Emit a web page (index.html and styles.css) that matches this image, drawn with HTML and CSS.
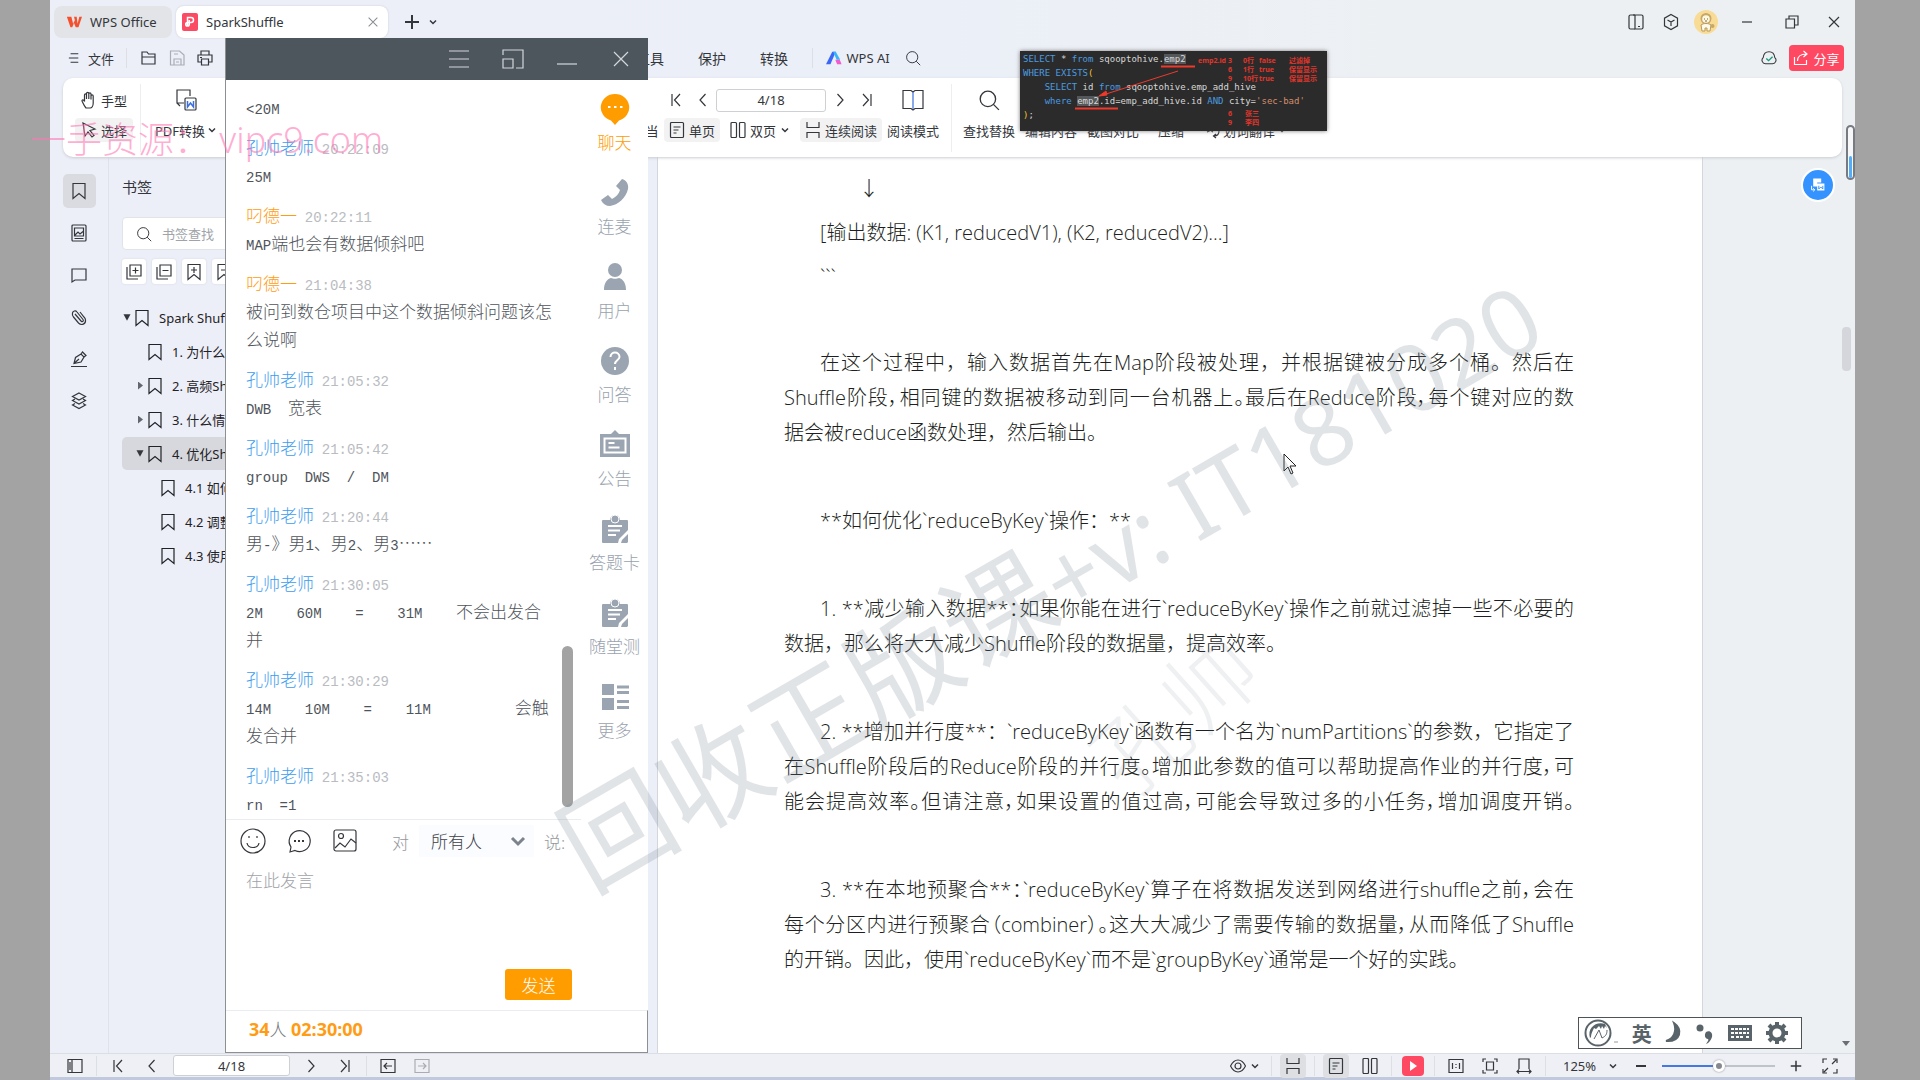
FILE: index.html
```html
<!DOCTYPE html>
<html lang="zh-CN">
<head>
    <meta charset="UTF-8">
    <meta name="viewport" content="width=device-width, initial-scale=1.0">
    <title>SparkShuffle - WPS Office</title>
    <link rel="stylesheet" href="styles.css">
</head>
<body>
    <!-- shared icons -->
    <svg class="sprite" aria-hidden="true">
        <symbol id="i-down" viewBox="0 0 10 10"><path d="M2 3.5l3 3 3-3" stroke-width="1.5"/></symbol>
        <symbol id="i-first" viewBox="0 0 16 16"><path d="M4 2v12M12 2L6.500 8l5.500 6"/></symbol>
        <symbol id="i-prev" viewBox="0 0 16 16"><path d="M10.500 2L5 8l5.500 6"/></symbol>
        <symbol id="i-next" viewBox="0 0 16 16"><path d="M5.500 2L11 8l-5.500 6"/></symbol>
        <symbol id="i-last" viewBox="0 0 16 16"><path d="M12 2v12M4 2l5.500 6L4 14"/></symbol>
        <symbol id="i-close" viewBox="0 0 16 16"><path d="M3 3l10 10M13 3L3 13"/></symbol>
        <symbol id="i-min" viewBox="0 0 16 16"><path d="M3 8h10"/></symbol>
        <symbol id="i-plus" viewBox="0 0 16 16"><path d="M8 1v14M1 8h14"/></symbol>
        <symbol id="i-search" viewBox="0 0 20 20"><circle cx="9" cy="9" r="7"/><path d="M14 14l5 5"/></symbol>
        <symbol id="i-mark" viewBox="0 0 16 18"><path d="M2 1.500h12v15l-6-5-6 5z"/></symbol>
        <symbol id="i-page" viewBox="0 0 16 16"><rect x="1.500" y=".5" width="13" height="15" rx="1"/><path d="M4.500 5h7M4.500 8h5M4.500 11h3"/></symbol>
        <symbol id="i-dual" viewBox="0 0 16 16"><rect x="1" y=".5" width="5.500" height="15" rx="1"/><rect x="9.500" y=".5" width="5.500" height="15" rx="1"/></symbol>
        <symbol id="i-cont" viewBox="0 0 16 16"><path d="M2 0v5.500h12V0M2 16v-5.500h12V16"/></symbol>
        <symbol id="i-note" viewBox="0 0 30 32"><path d="M3 7h7a5 5 0 0 1 10 0h7a1 1 0 0 1 1 1v9l-9 9-1 4H3a1 1 0 0 1-1-1V8a1 1 0 0 1 1-1z"/><path class="cut" d="M8 13h14M8 17.500h12M8 22h8"/><path d="M21 30l1-3 6-6v8l-1 1z"/><circle class="ring" cx="15" cy="6" r="4"/></symbol>
    </svg>

    <div class="app">
        <header class="tabs">
            <button class="tab tab-home">
                <svg class="icon" viewBox="0 0 18 16"><path d="M1 2h5l2 8 2-4-1-4h3l1 8 2-8h3l-4 12h-3l-2-5-2 5H5z" fill="#f4502e" stroke="none"/></svg>
                WPS Office
            </button>
            <div class="tab tab-open">
                <svg class="icon" viewBox="0 0 16 18"><rect width="16" height="18" rx="2" fill="#fb4a63" stroke="none"/><path d="M5.500 13V4.500h3.500a2.500 2.500 0 0 1 0 5H5.500a1.800 1.800 0 1 0 1.800 1.800V7" stroke="#fff" stroke-width="1.500"/></svg>
                <span>SparkShuffle</span>
                <button class="plain tab-close" aria-label="关闭标签"><svg class="icon"><use href="#i-close"/></svg></button>
            </div>
            <button class="plain" aria-label="新建"><svg class="icon bold"><use href="#i-plus"/></svg></button>
            <button class="plain" aria-label="标签列表"><svg class="icon tiny"><use href="#i-down"/></svg></button>
            <div class="window-buttons">
                <button class="plain" aria-label="分屏"><svg class="icon" viewBox="0 0 16 18"><path d="M7 16H2.500A1.500 1.500 0 0 1 1 14.500v-11A1.500 1.500 0 0 1 2.500 2H7"/><path d="M5 2h8.500A1.500 1.500 0 0 1 15 3.500v11a1.500 1.500 0 0 1-1.500 1.500H7V2M10 13.500h2"/></svg></button>
                <button class="plain" aria-label="应用"><svg class="icon" viewBox="0 0 16 18"><path d="M8 1.500l6.500 3.700v7.600L8 16.500l-6.500-3.700V5.200zM4.500 7L8 9l3.500-2M8 9v4"/></svg></button>
                <button class="plain avatar" aria-label="账号"><svg viewBox="0 0 24 24"><circle cx="12" cy="12" r="12" fill="#f8dc96"/><circle cx="12" cy="8.500" r="5.500" fill="#c8a868"/><circle cx="12" cy="9" r="3.800" fill="#fff8e0"/><path d="M7 15c2-2 8-2 10 0l-1 6h-3v-3h-2v3H8z" fill="#fffbe8" stroke="#b89860"/><path d="M10.500 8.500v1M13.500 8.500v1M11 11h2" stroke="#79633a"/><circle cx="18.500" cy="16" r="2" fill="#c8a868"/></svg></button>
                <button class="plain win-min" aria-label="最小化"><svg class="icon"><use href="#i-min"/></svg></button>
                <button class="plain" aria-label="还原"><svg class="icon" viewBox="0 0 16 16"><path d="M2 5h8.500v9H2zM5 5V2h9v9h-3.500"/></svg></button>
                <button class="plain" aria-label="关闭"><svg class="icon"><use href="#i-close"/></svg></button>
            </div>
        </header>

        <nav class="menu">
            <button class="plain menu-file"><svg class="icon small" viewBox="0 0 14 14"><path d="M3 2h9M1 7h11M3 12h9"/></svg>文件</button>
            <i class="sep"></i>
            <button class="plain" aria-label="打开"><svg class="icon" viewBox="0 0 16 16"><path d="M1 14V2h5l1.500 2H14v10zM1 7h13.500"/></svg></button>
            <button class="plain faded" aria-label="保存"><svg class="icon" viewBox="0 0 16 16"><path d="M1.500 1h9L15 5v10H1.500zM5 15V9h7v6M5 4h4M7 12h3"/></svg></button>
            <button class="plain" aria-label="打印"><svg class="icon" viewBox="0 0 16 16"><path d="M4 5V1h8v4M4 12H1V5h14v7h-3M4.500 9h7v6h-7zM3 7.500h2"/></svg></button>
            <div class="menu-words">
                <button class="plain">工具</button>
                <button class="plain">保护</button>
                <button class="plain">转换</button>
            </div>
            <i class="sep"></i>
            <button class="plain menu-ai"><svg class="icon" viewBox="0 0 18 16"><path d="M7 1h4L5 15H0z" fill="#3c66f5" stroke="none"/><path d="M8 1h3l5 9h-4z" fill="#35b6fb" stroke="none"/><path d="M10.500 10h5l2 5h-5z" fill="#f25ad0" stroke="none"/></svg>WPS AI</button>
            <button class="plain" aria-label="搜索"><svg class="icon"><use href="#i-search"/></svg></button>
            <div class="menu-right">
                <svg class="icon" viewBox="0 0 18 16"><path d="M5 14.500a4 4 0 0 1-2.500-7C3 3 6 1 9 1s6 2 6.500 6.500a4 4 0 0 1-2.500 7z"/><path d="M6 8.500l2.500 2.500L13 6.500" stroke="#159a7d" stroke-width="1.500"/></svg>
                <button class="share"><svg class="icon" viewBox="0 0 16 16"><path d="M1.500 7v7.500h12V10M4.500 11c0-5 3-7 9-7M10.500 1l3.500 3-3.500 3"/></svg>分享</button>
            </div>
        </nav>

        <section class="ribbon">
            <div class="tool-group">
                <button class="tool"><svg class="icon" viewBox="0 0 16 18"><path d="M5 17c-2-2-3-5-4-7 0-1.500 1.500-1.500 2.500.5V4c0-1.500 2-1.500 2 0v4V2.500c0-1.500 2.300-1.500 2.300 0V8 3c0-1.500 2.200-1.500 2.200 0v5.500V5c0-1.500 2.200-1.500 2.200 0v7c0 3-1.500 5-3 5z"/></svg>手型</button>
                <button class="tool active"><svg class="icon" viewBox="0 0 16 16"><path d="M2 1l12 6-5 1.500 4 5-2 1.500-4-5-3 4z"/></svg>选择</button>
            </div>
            <i class="sep tall"></i>
            <div class="tool-group center pdf">
                <svg class="icon big" viewBox="0 0 22 22"><path d="M9 14H2V1h13v6M2 14l3 3"/><rect x="10" y="9" width="11" height="12" rx="1"/><path d="M12.500 12v6l3-4 3 4v-6" stroke="#3b6fe0" stroke-width="1.500"/></svg>
                <button class="tool">PDF转换<svg class="icon tiny"><use href="#i-down"/></svg></button>
            </div>
            <div class="tool-group nav-group">
                <div class="pager">
                    <button class="plain" aria-label="首页"><svg class="icon"><use href="#i-first"/></svg></button>
                    <button class="plain" aria-label="上一页"><svg class="icon"><use href="#i-prev"/></svg></button>
                    <input class="page-input" type="text" value="4/18" aria-label="页码">
                    <button class="plain" aria-label="下一页"><svg class="icon"><use href="#i-next"/></svg></button>
                    <button class="plain" aria-label="末页"><svg class="icon"><use href="#i-last"/></svg></button>
                </div>
                <div class="views">
                    <button class="plain">当</button>
                    <button class="tool active"><svg class="icon"><use href="#i-page"/></svg>单页</button>
                    <button class="tool"><svg class="icon"><use href="#i-dual"/></svg>双页<svg class="icon tiny"><use href="#i-down"/></svg></button>
                    <button class="tool active"><svg class="icon"><use href="#i-cont"/></svg>连续阅读</button>
                </div>
            </div>
            <div class="tool-group center">
                <svg class="icon big" viewBox="0 0 22 22"><path d="M11 3L9 1.500H1v18h8l2 1.500 2-1.500h8v-18h-8z"/><path d="M11 3v17" stroke="#3b6fe0"/></svg>
                <button class="tool">阅读模式</button>
            </div>
            <i class="sep tall"></i>
            <div class="tool-group center">
                <svg class="icon big"><use href="#i-search"/></svg>
                <button class="tool">查找替换</button>
            </div>
            <div class="tool-group center"><span class="icon big"></span><button class="tool">编辑内容</button></div>
            <div class="tool-group center"><span class="icon big"></span><button class="tool">截图对比</button></div>
            <div class="tool-group center zip"><span class="icon big"></span><button class="tool">压缩</button></div>
            <div class="tool-group center"><span class="icon big"></span><button class="tool"><svg class="icon" viewBox="0 0 16 16"><path d="M1 3h7M4.500 1v2M2 10c3-1 5-4 5-7M3 5c1 3 3 4 5 5M9 14c3 0 5-1 5-5M11 12l-2.500 2 2.500 2"/></svg>划词翻译<svg class="icon tiny"><use href="#i-down"/></svg></button></div>
        </section>

        <main class="work">
            <aside class="rail">
                <button class="rail-btn active" aria-label="书签"><svg class="icon"><use href="#i-mark"/></svg></button>
                <button class="rail-btn" aria-label="缩略图"><svg class="icon" viewBox="0 0 16 18"><rect x="1" y="1" width="14" height="16" rx="1"/><path d="M3.500 4h9v8h-9zM4 11l3-3 2 2 3-2.500M3.500 14.500h9"/></svg></button>
                <button class="rail-btn" aria-label="批注"><svg class="icon" viewBox="0 0 16 16"><path d="M1 15V2h14v11H4z"/></svg></button>
                <button class="rail-btn" aria-label="附件"><svg class="icon" viewBox="0 0 16 16"><path d="M4 5l6 7c1.500 1.500 3 0 2-1.500L6 3C4.500 1 2 2 1.500 4s0 3 1 4l5 6c3 3 7.500 1 7-3 0-1-.5-2-1.500-3L9 3"/></svg></button>
                <button class="rail-btn" aria-label="签名"><svg class="icon" viewBox="0 0 16 16"><path d="M0 15.500h16M3 12.500l1.500-6L10 3l3 3-3 5zM10 3l1.500-2L15 4.500 13 6M3 12.500L8 8"/></svg></button>
                <button class="rail-btn" aria-label="图层"><svg class="icon" viewBox="0 0 16 18"><path d="M8 1l6.500 3.500L8 8 1.500 4.500zM4 7L1.500 8.500 8 12l6.500-3.500L12 7M4 11.500L1.500 13 8 16.500l6.500-3.500-2.500-1.500"/></svg></button>
            </aside>

            <aside class="marks">
                <h2>书签</h2>
                <label class="mark-search">
                    <svg class="icon"><use href="#i-search"/></svg>
                    <input type="text" placeholder="书签查找">
                </label>
                <div class="mark-tools">
                    <button aria-label="展开"><svg class="icon" viewBox="0 0 16 16"><path d="M4 1h11v11H4zM1 3v12h11M9.500 3.500v6M6.500 6.500h6"/></svg></button>
                    <button aria-label="收起"><svg class="icon" viewBox="0 0 16 16"><path d="M4 1h11v11H4zM1 3v12h11M6.500 6.500h6"/></svg></button>
                    <button aria-label="添加书签"><svg class="icon" viewBox="0 0 16 16"><path d="M2 .5h12v15l-6-5-6 5zM8 3v6M5 6h6"/></svg></button>
                    <button aria-label="删除书签"><svg class="icon" viewBox="0 0 16 16"><path d="M2 .5h12v15l-6-5-6 5zM5 6h6"/></svg></button>
                </div>
                <ul class="tree">
                    <li class="lv0"><i class="arrow open"></i><svg class="icon"><use href="#i-mark"/></svg>Spark Shuffle</li>
                    <li class="lv1"><i class="arrow none"></i><svg class="icon"><use href="#i-mark"/></svg>1. 为什么</li>
                    <li class="lv1"><i class="arrow"></i><svg class="icon"><use href="#i-mark"/></svg>2. 高频Shuffle</li>
                    <li class="lv1"><i class="arrow"></i><svg class="icon"><use href="#i-mark"/></svg>3. 什么情况</li>
                    <li class="lv1 selected"><i class="arrow open"></i><svg class="icon"><use href="#i-mark"/></svg>4. 优化Shuffle</li>
                    <li class="lv2"><i class="arrow none"></i><svg class="icon"><use href="#i-mark"/></svg>4.1 如何</li>
                    <li class="lv2"><i class="arrow none"></i><svg class="icon"><use href="#i-mark"/></svg>4.2 调整</li>
                    <li class="lv2"><i class="arrow none"></i><svg class="icon"><use href="#i-mark"/></svg>4.3 使用</li>
                </ul>
            </aside>

            <article class="doc">
                <p class="doc-arrow">↓</p>
                <p class="tight">[输出数据: (K1, reducedV1), (K2, reducedV2)...]</p>
                <p class="tight">```</p>
                <p>
                    <span class="full first">在这个过程中，输入数据首先在Map阶段被处理，并根据键被分成多个桶。然后在</span>
                    <span class="full snug">Shuffle阶段，相同键的数据被移动到同一台机器上。最后在Reduce阶段，每个键对应的数</span>
                    <span class="line">据会被reduce函数处理，然后输出。</span>
                </p>
                <p><span class="line first">**如何优化`reduceByKey`操作：**</span></p>
                <p>
                    <span class="full first snug">1. **减少输入数据**：如果你能在进行`reduceByKey`操作之前就过滤掉一些不必要的</span>
                    <span class="line">数据，那么将大大减少Shuffle阶段的数据量，提高效率。</span>
                </p>
                <p>
                    <span class="full first">2. **增加并行度**：`reduceByKey`函数有一个名为`numPartitions`的参数，它指定了</span>
                    <span class="full snug">在Shuffle阶段后的Reduce阶段的并行度。增加此参数的值可以帮助提高作业的并行度，可</span>
                    <span class="full snug">能会提高效率。但请注意，如果设置的值过高，可能会导致过多的小任务，增加调度开销。</span>
                </p>
                <p>
                    <span class="full first snug">3. **在本地预聚合**：`reduceByKey`算子在将数据发送到网络进行shuffle之前，会在</span>
                    <span class="full snug">每个分区内进行预聚合（combiner）。这大大减少了需要传输的数据量，从而降低了Shuffle</span>
                    <span class="line">的开销。因此，使用`reduceByKey`而不是`groupByKey`通常是一个好的实践。</span>
                </p>
            </article>
        </main>

        <footer class="status">
            <button class="cell" aria-label="侧栏"><svg class="icon" viewBox="0 0 16 16"><path d="M1 1.500h14v13H1zM5 1.500v13M3 4v8"/></svg></button>
            <i class="sep"></i>
            <button class="cell" aria-label="首页"><svg class="icon"><use href="#i-first"/></svg></button>
            <button class="cell" aria-label="上一页"><svg class="icon"><use href="#i-prev"/></svg></button>
            <input class="page-input" type="text" value="4/18" aria-label="当前页">
            <button class="cell" aria-label="下一页"><svg class="icon"><use href="#i-next"/></svg></button>
            <button class="cell" aria-label="末页"><svg class="icon"><use href="#i-last"/></svg></button>
            <i class="sep"></i>
            <button class="cell" aria-label="后退"><svg class="icon" viewBox="0 0 16 16"><path d="M1 1.500h14v13H1zM12 8H4M7 5L4 8l3 3"/></svg></button>
            <button class="cell faded" aria-label="前进"><svg class="icon" viewBox="0 0 16 16"><path d="M1 1.500h14v13H1zM4 8h8M9 5l3 3-3 3"/></svg></button>
            <div class="status-right">
                <button class="cell wide" aria-label="护眼"><svg class="icon" viewBox="0 0 16 16"><path d="M.5 8c2-4 5-6 7.500-6s5.500 2 7.500 6c-2 4-5 6-7.500 6S2.500 12 .5 8z"/><circle cx="8" cy="8" r="3"/></svg><svg class="icon tiny"><use href="#i-down"/></svg></button>
                <i class="sep"></i>
                <button class="cell" aria-label="连续"><span class="on"><svg class="icon"><use href="#i-cont"/></svg></span></button>
                <i class="sep"></i>
                <button class="cell" aria-label="单页"><span class="on"><svg class="icon"><use href="#i-page"/></svg></span></button>
                <button class="cell" aria-label="双页"><svg class="icon"><use href="#i-dual"/></svg></button>
                <i class="sep"></i>
                <button class="cell" aria-label="播放"><span class="play"></span></button>
                <i class="sep"></i>
                <button class="cell" aria-label="实际大小"><svg class="icon" viewBox="0 0 16 16"><path d="M1 1.500h14v13H1zM4.500 5v6M11.500 5v6M8 6v1M8 9v1"/></svg></button>
                <button class="cell" aria-label="适合页面"><svg class="icon" viewBox="0 0 16 16"><path d="M1 4V1h3M12 1h3v3M15 12v3h-3M4 15H1v-3M4.500 4h7v8h-7z"/></svg></button>
                <button class="cell" aria-label="适合宽度"><svg class="icon" viewBox="0 0 16 16"><path d="M3 11V1h10v10M1 13.500h14M3 11.500l-2 2 2 2M13 11.500l2 2-2 2"/></svg></button>
                <i class="sep"></i>
                <span class="pick zoom-pick"><select aria-label="缩放"><option>125%</option></select><svg class="icon tiny"><use href="#i-down"/></svg></span>
                <button class="cell" aria-label="缩小"><svg class="icon bold"><use href="#i-min"/></svg></button>
                <input class="zoom-range" type="range" min="0" max="100" value="50" aria-label="缩放比例">
                <button class="cell" aria-label="放大"><svg class="icon small bold"><use href="#i-plus"/></svg></button>
                <button class="cell" aria-label="全屏"><svg class="icon" viewBox="0 0 16 16"><path d="M1 5V1h4M11 1h4v4M15 11v4h-4M5 15H1v-4M10 6l4-4M2 14l4-4"/></svg></button>
            </div>
        </footer>

        <!-- page scrollbar and convert button float above the document -->
        <button class="convert" aria-label="转换为Word"><svg class="icon" viewBox="0 0 20 20"><path d="M4 2h10v5H9v5H4zM9 8h9v9H9z" fill="#fff" stroke="none"/><path d="M2 11v5h4M4 14l2 2-2 2"/><path d="M11 11v4l2.500-2.500L16 15v-4" stroke="#3493ff"/></svg></button>
        <div class="gauge"><i></i></div>
        <div class="page-thumb"></div>
        <i class="page-down"></i>

        <!-- chat window -->
        <section class="chat">
            <header class="chat-bar">
                <button class="plain" aria-label="菜单"><svg class="icon big" viewBox="0 0 22 22"><path d="M1 3h20M1 11h20M1 19h20"/></svg></button>
                <button class="plain" aria-label="缩小窗口"><svg class="icon big" viewBox="0 0 22 22"><path d="M1 7V2h20v18h-7M1 11h10v9H1z"/></svg></button>
                <button class="plain" aria-label="最小化"><svg class="icon big" viewBox="0 0 22 22"><path d="M1 16h20"/></svg></button>
                <button class="plain" aria-label="关闭"><svg class="icon big" viewBox="0 0 22 22"><path d="M4 4l14 14M18 4L4 18"/></svg></button>
            </header>
            <div class="chat-body">
                <div class="chat-main">
                    <div class="messages">
                        <div class="msg"><p><b>&lt;20M</b></p></div>
                        <div class="msg"><h4>孔帅老师 <time>20:22:09</time></h4><p><b>25M</b></p></div>
                        <div class="msg guest"><h4>叼德一 <time>20:22:11</time></h4><p><b>MAP</b>端也会有数据倾斜吧</p></div>
                        <div class="msg guest"><h4>叼德一 <time>21:04:38</time></h4><p>被问到数仓项目中这个数据倾斜问题该怎</p><p>么说啊</p></div>
                        <div class="msg"><h4>孔帅老师 <time>21:05:32</time></h4><p><b>DWB  </b>宽表</p></div>
                        <div class="msg"><h4>孔帅老师 <time>21:05:42</time></h4><p><b>group  DWS  /  DM</b></p></div>
                        <div class="msg"><h4>孔帅老师 <time>21:20:44</time></h4><p>男<b>-</b>》男<b>1</b>、男<b>2</b>、男<b>3</b>……</p></div>
                        <div class="msg"><h4>孔帅老师 <time>21:30:05</time></h4><p><b>2M    60M    =    31M    </b>不会出发合</p><p>并</p></div>
                        <div class="msg"><h4>孔帅老师 <time>21:30:29</time></h4><p><b>14M    10M    =    11M          </b>会触</p><p>发合并</p></div>
                        <div class="msg"><h4>孔帅老师 <time>21:35:03</time></h4><p><b>rn  =1</b></p></div>
                    </div>
                    <div class="send-tools">
                        <button class="plain" aria-label="表情"><svg class="icon face" viewBox="0 0 26 26"><circle cx="13" cy="13" r="12"/><path d="M7 15c1 6 11 6 12 0M9 8v2M17 8v2"/></svg></button>
                        <button class="plain" aria-label="常用语"><svg class="icon face" viewBox="0 0 26 26"><path d="M4 24l1-5A10.500 10.500 0 1 1 9 22.500z"/><path d="M8 13h2M12 13h2M16 13h2" stroke-width="2"/></svg></button>
                        <button class="plain" aria-label="图片"><svg class="icon face" viewBox="0 0 26 26"><rect x="2" y="2" width="22" height="21" rx="2"/><circle cx="9" cy="8" r="2.500"/><path d="M3 20l5-5 5 4 6-8 5 4"/></svg></button>
                        <label class="to" for="target">对</label>
                        <span class="pick"><select id="target"><option>所有人</option></select><svg class="icon"><use href="#i-down"/></svg></span>
                        <span class="says">说:</span>
                    </div>
                    <textarea class="draft" placeholder="在此发言" aria-label="在此发言"></textarea>
                    <button class="send">发送</button>
                </div>
                <nav class="chat-side">
                    <button class="side-item current"><svg viewBox="0 0 30 32"><path d="M15 1a14 13.500 0 0 1 4 26.500L15 32l-4-4.500A14 13.500 0 0 1 15 1z"/><path class="cut" d="M8 14h2.500M14 14h2.500M20 14h2.500" stroke-width="3"/></svg>聊天</button>
                    <button class="side-item"><svg viewBox="0 0 30 32"><path d="M22 2c4 1 7 5 6 10-2 9-10 16-18 17-4 0-7-2-9-6l7-5 4 4c4-2 7-5 8-9l-4-4z"/></svg>连麦</button>
                    <button class="side-item"><svg viewBox="0 0 30 32"><circle cx="15" cy="9" r="7"/><path d="M4 29c0-7 3-11 7-12 2 1 6 1 8 0 4 1 7 5 7 12z"/></svg>用户</button>
                    <button class="side-item"><svg viewBox="0 0 30 32"><circle cx="15" cy="16" r="14"/><path class="cut" d="M10.500 12c0-6 9-6 9 0 0 3-4.500 3-4.500 7M15 22v3" stroke-width="3"/></svg>问答</button>
                    <button class="side-item"><svg viewBox="0 0 30 32"><path d="M11 5l4-4 4 4h11v23H0V5z"/><path class="cut" d="M4.500 9.500h21v14h-21zM8.500 14h6M8.500 18.500h11"/></svg>公告</button>
                    <button class="side-item"><svg><use href="#i-note"/></svg>答题卡</button>
                    <button class="side-item"><svg><use href="#i-note"/></svg>随堂测</button>
                    <button class="side-item"><svg viewBox="0 0 30 32"><path d="M2 3h12v11H2zM2 17h12v12H2zM17 4.500h12v3H17zM17 10h12v3H17zM17 19h12v3H17zM17 25h12v3H17z"/></svg>更多</button>
                </nav>
                <i class="chat-scroll"></i>
            </div>
            <footer class="chat-foot"><strong>34</strong>人 <strong>02:30:00</strong></footer>
        </section>

        <!-- pinned SQL note -->
        <figure class="sql">
<pre><em>SELECT</em> * <em>from</em> sqooptohive.<mark>emp2</mark>
<em>WHERE EXISTS</em><u>(</u>
    <em>SELECT</em> id <em>from</em> sqooptohive.emp_add_hive
    <em>where</em> <mark>emp2</mark>.id=emp_add_hive.id <em>AND</em> city=<s>'sec-bad'</s>
<u>)</u>;</pre>
            <svg class="sql-lines" viewBox="0 0 307 80"><path d="M141 15.500h34M55 57.500h43" stroke-width="2"/><path d="M158 20L83 44"/><path d="M79 45l7-5 1 4z" fill="#f0392b"/></svg>
            <div class="sql-cases">
                <span>emp2.id</span><span>3</span><span>0行</span><span>false</span><span>过滤掉</span>
                <span></span><span>6</span><span>1行</span><span>true</span><span>保留显示</span>
                <span></span><span>9</span><span>10行</span><span>true</span><span>保留显示</span>
            </div>
            <div class="sql-names"><span>6</span><span>张三</span><span>9</span><span>李四</span></div>
        </figure>

        <!-- input method bar -->
        <div class="ime">
            <svg viewBox="0 0 36 30"><circle cx="14" cy="15" r="12.500" fill="none" stroke="#59636a" stroke-width="2"/><path d="M6 20C3 10 12 3 21 6l2 4-2-2-1 3-2-3-1 3-2-3-3 3-2-1c-2 4-3 6-3 9z" fill="#59636a"/><path d="M10 21l5-9 3 8M18 20c4-2 5-4 5-8" fill="none" stroke="#59636a"/><path d="M30 24h4" stroke="#999"/></svg>
            <b>英</b>
            <svg viewBox="0 0 20 30"><path d="M10 5c9 6 7 19-8 18 8-2 11-10 8-18z" stroke="#59636a" stroke-width="2"/></svg>
            <svg viewBox="0 0 20 30"><circle cx="5" cy="10" r="3.500"/><path d="M11 14c4-2 7 1 6 5-1 3-3 6-6 7 2-3 3-4 2-5-3 0-4-4-2-7z"/></svg>
            <svg viewBox="0 0 26 30"><rect x="1" y="7" width="24" height="16"/><path d="M4 11h18M4 15h18M4 19h3M9 19h8M19 19h3" stroke="#fff" stroke-width="2" stroke-dasharray="3 1"/></svg>
            <svg viewBox="0 0 24 30"><circle cx="12" cy="15" r="6.500" fill="none" stroke="#59636a" stroke-width="4"/><path d="M12 4v4M12 22v4M1 15h4M19 15h4M4 7l3 3M17 20l3 3M20 7l-3 3M7 20l-3 3" stroke="#59636a" stroke-width="4"/></svg>
        </div>

        <svg class="pointer" viewBox="0 0 14 22"><path d="M1 1v17l4-4 3 7 2-1-3-7h6z" fill="#fff" stroke="#222"/></svg>
    </div>

    <div class="stamp" aria-hidden="true"><span>回收正版课</span>+v: IT181020</div>
    <div class="stamp-faint" aria-hidden="true">孔帅</div>
    <div class="stamp-pink" aria-hidden="true">一手资源： vipc9.com</div>
</body>
</html>
```

FILE: styles.css
```css
* {
    box-sizing: border-box;
}

body {
    margin: 0;
    height: 100vh;
    padding: 0 65px 0 50px;
    background: #a3a3a3;
    font-family: "Noto Sans", "Noto Sans CJK SC", sans-serif;
    font-size: 13px;
    color: #33363b;
    overflow: hidden;
    position: relative;
}

p, h2, h4, ul, figure, pre {
    margin: 0;
    padding: 0;
}

button, input, select, textarea {
    font: inherit;
    color: inherit;
    border: none;
    background: none;
    padding: 0;
    margin: 0;
    outline: none;
}

.sprite {
    position: absolute;
    width: 0;
    height: 0;
}

.icon {
    width: 16px;
    height: 18px;
    flex: none;
    fill: none;
    stroke: currentColor;
    stroke-width: 1.2;
}

.icon.big { width: 22px; height: 22px; }
.icon.small { width: 12px; height: 14px; }
.icon.tiny { width: 10px; height: 10px; }
.icon.bold { stroke-width: 2; }

.plain {
    display: flex;
    align-items: center;
    justify-content: center;
    white-space: nowrap;
}

.faded { color: #a9adb3; }

.sep {
    width: 1px;
    height: 20px;
    margin: 0 4px;
    background: #dcdfe4;
    flex: none;
}

.app {
    height: 100%;
    display: flex;
    flex-direction: column;
    position: relative;
    background: linear-gradient(90deg, #edeff8, #ebeff8 45%, #edf0f3 75%);
    border-bottom: 3px solid #c1c9dc;
}

/* title tabs */
.tabs {
    display: flex;
    align-items: center;
    height: 43px;
    padding: 0 0 0 4px;
    flex: none;
}

.tab {
    display: flex;
    align-items: center;
    gap: 8px;
    height: 32px;
    border-radius: 8px;
    padding: 0 14px;
}

.tab-home { background: #e2e4e8; width: 118px; padding: 0 12px; white-space: nowrap; }

.tab-open {
    background: #fff;
    width: 212px;
    margin: 0 16px 0 4px;
    padding: 0 6px;
    box-shadow: 0 0 2px #c4c8d0;
}

.tab-close { margin-left: auto; width: 18px; color: #8a8d92; }
.tab-close .icon { width: 14px; }

.tabs > .plain { margin-right: 8px; }

.window-buttons {
    display: flex;
    align-items: center;
    margin-left: auto;
}

.window-buttons .plain { width: 42px; }
.window-buttons .plain:nth-child(-n+3) { width: 35px; }
.window-buttons .win-min { width: 48px; }
.avatar svg { width: 24px; height: 24px; fill: none; }

/* menu row */
.menu {
    display: flex;
    align-items: center;
    height: 30px;
    padding: 0 11px 0 18px;
    margin-bottom: 5px;
    gap: 8px;
    flex: none;
}

.menu .plain { width: 20px; }
.menu .menu-file { width: auto; gap: 8px; }
.menu-words { display: flex; gap: 34px; margin-left: 413px; }
.menu .menu-words .plain { width: 28px; font-size: 14px; }
.menu-words + .sep { margin-left: 16px; }
.menu .menu-ai { width: 66px; gap: 4px; margin-right: 4px; }

.menu-right {
    display: flex;
    align-items: center;
    gap: 12px;
    margin-left: auto;
}

.share {
    display: flex;
    align-items: center;
    justify-content: center;
    gap: 4px;
    width: 55px;
    height: 26px;
    border-radius: 4px;
    background: #ff4861;
    color: #fff;
}

/* ribbon */
.ribbon {
    display: flex;
    height: 79px;
    margin: 0 13px;
    padding: 0 12px;
    background: #fff;
    border-radius: 10px;
    box-shadow: 0 1px 3px #c9ccd2;
    flex: none;
    position: relative;
    white-space: nowrap;
}

.tool-group {
    display: flex;
    flex-direction: column;
    gap: 6px;
    padding-top: 10px;
    flex: none;
}

.tool-group.center { align-items: center; width: 62px; }
.tool-group.center .icon.big { height: 24px; }
.tool-group.pdf { margin-left: 8px; }
.sep.tall { height: 68px; margin: 6px 6px 0 7px; background: #eceef0; }

.tool {
    display: flex;
    align-items: center;
    gap: 4px;
    height: 24px;
    padding: 0 6px;
    border-radius: 4px;
}

.tool.active { background: #f2f2f3; }
.center .tool { padding: 0; gap: 2px; }

.nav-group { margin-left: 428px; }

.pager {
    display: flex;
    align-items: center;
    height: 24px;
    padding-left: 17px;
}

.pager .plain { width: 27px; }

.page-input {
    width: 110px;
    height: 23px;
    border: 1px solid #cdd0d5;
    border-radius: 3px;
    background: #fff;
    text-align: center;
}

.views { display: flex; gap: 5px; }
.views .plain { width: 14px; }
.views .tool { padding: 0 5px; }
.zip.center { width: 46px; margin: 0 4px; }
.tool-group.center:last-child { width: 96px; }

/* workspace */
.work {
    display: flex;
    flex: 1;
    min-height: 0;
}

.rail {
    width: 59px;
    padding-top: 17px;
    display: flex;
    flex-direction: column;
    align-items: center;
    gap: 8px;
    border-right: 1px solid #dfe2ea;
    flex: none;
}

.rail-btn {
    display: flex;
    align-items: center;
    justify-content: center;
    width: 33px;
    height: 34px;
    border-radius: 5px;
}

.rail-btn.active { background: #d9dbe0; }

.marks {
    width: 545px;
    padding: 18px 40px 0 13px;
    flex: none;
}

.marks h2 { font-size: 15px; font-weight: 400; line-height: 24px; }

.mark-search {
    display: flex;
    align-items: center;
    gap: 10px;
    height: 33px;
    margin-top: 18px;
    padding-left: 13px;
    background: #fff;
    border: 1px solid #e0e3e8;
    border-radius: 4px;
}

.mark-search input { flex: 1; }
.mark-search input::placeholder { color: #a0a3a8; }

.mark-tools { display: flex; gap: 6px; margin-top: 9px; }

.mark-tools button {
    display: flex;
    align-items: center;
    justify-content: center;
    width: 24px;
    height: 25px;
    background: #fff;
    border-radius: 3px;
    box-shadow: 0 0 2px #d0d3da;
}

.tree { list-style: none; margin-top: 17px; }

.tree li {
    display: flex;
    align-items: center;
    height: 33px;
    margin-bottom: 1px;
    border-radius: 5px;
    color: #1f2226;
}

.tree .icon { margin: 0 9px 0 2px; }
.tree .lv1 { padding-left: 13px; }
.tree .lv2 { padding-left: 26px; }
.tree .selected { background: #d6d8dd; }

.arrow {
    width: 10px;
    height: 8px;
    flex: none;
    background: #62666d;
    clip-path: polygon(30% 0, 80% 50%, 30% 100%);
}

.arrow.open { clip-path: polygon(15% 10%, 85% 10%, 50% 90%); background: #34373c; }
.arrow.none { visibility: hidden; }

.doc {
    flex: 1;
    margin: 0 152px 0 3px;
    padding: 14px 128px 0 126px;
    background: #fff;
    border: solid #d3d6dc;
    border-width: 0 1px;
    overflow: hidden;
    font-family: "Open Sans", "Noto Sans CJK SC", sans-serif;
    font-weight: 300;
    font-size: 20px;
    line-height: 35px;
    color: #1d1f22;
}

.doc p { margin-bottom: 53px; white-space: nowrap; }
.doc .doc-arrow { margin-bottom: 9px; padding-left: 75px; }
.doc .tight { margin-bottom: 9px; padding-left: 36px; }
.doc .tight + p:not(.tight) { margin-top: 51px; }
.line, .full { display: block; }
.full { text-align: justify; text-align-last: justify; white-space: normal; }
.first { padding-left: 36px; }

/* proportional punctuation for the fuller lines */
.snug { font-feature-settings: "palt"; }

/* status bar */
.status {
    display: flex;
    align-items: center;
    height: 24px;
    padding: 0 8px;
    background: #eff0f5;
    border-top: 1px solid #dcdee5;
    flex: none;
}

.cell {
    display: flex;
    align-items: center;
    justify-content: center;
    width: 34px;
    height: 24px;
}

.cell.wide { width: 44px; gap: 4px; }
.cell .icon { height: 16px; }
.status .page-input { width: 117px; height: 21px; margin: 0 4px; }
.status-right { display: flex; align-items: center; margin-left: auto; }

.on, .play {
    display: flex;
    align-items: center;
    justify-content: center;
    width: 26px;
    height: 24px;
    border-radius: 4px;
    background: #dddfe3;
}

.play { width: 22px; height: 20px; background: #ff4861; }

.play::before {
    content: "";
    border: 5px solid transparent;
    border-left: 7px solid #fff;
    border-right: 0;
}

.pick { display: flex; align-items: center; position: relative; }
.pick select { appearance: none; width: 100%; }
.pick .icon { position: absolute; right: 6px; pointer-events: none; }
.zoom-pick { width: 74px; padding-left: 13px; }

.zoom-range {
    appearance: none;
    width: 113px;
    height: 2px;
    margin: 0 4px;
    background: linear-gradient(90deg, #4679e0 50%, #bfc3ca 50%);
}

.zoom-range::-webkit-slider-thumb {
    appearance: none;
    width: 12px;
    height: 12px;
    border-radius: 50%;
    background: #85898f;
    border: 3px solid #fff;
    box-shadow: 0 0 2px #888;
}

/* floating controls of the reader */
.convert {
    position: absolute;
    right: 20px;
    top: 168px;
    width: 34px;
    height: 34px;
    display: flex;
    align-items: center;
    justify-content: center;
    border-radius: 50%;
    border: 2px solid #fff;
    background: #3493ff;
    color: #fff;
}

.gauge {
    position: absolute;
    right: 0;
    top: 125px;
    width: 9px;
    height: 55px;
    display: flex;
    align-items: flex-end;
    border: 2px solid #777a80;
    border-radius: 5px;
    background: #f6f7f9;
}

.gauge i { flex: 1; height: 22px; margin: 0 1px; background: #53aef7; border-radius: 3px; }

.page-thumb {
    position: absolute;
    right: 4px;
    top: 327px;
    width: 9px;
    height: 44px;
    border-radius: 4px;
    background: #d4d6db;
}

.page-down {
    position: absolute;
    right: 5px;
    bottom: 31px;
    border: 4px solid transparent;
    border-top: 5px solid #6b6f75;
    border-bottom: 0;
}

/* chat window */
.chat {
    position: absolute;
    left: 175px;
    top: 38px;
    bottom: 24px;
    width: 423px;
    display: flex;
    flex-direction: column;
    background: #fff;
    border: solid #8d8f93;
    border-width: 0 0 1px 1px;
    font-size: 17px;
    font-weight: 300;
}

.chat-bar {
    display: flex;
    align-items: center;
    justify-content: flex-end;
    gap: 32px;
    height: 42px;
    padding-right: 16px;
    background: #4d555d;
    color: #d5d8db;
    flex: none;
}

.chat-body { display: flex; flex: 1; min-height: 0; position: relative; }
.chat-main { display: flex; flex-direction: column; flex: 1; }

.messages {
    display: flex;
    flex-direction: column;
    justify-content: flex-end;
    height: 740px;
    padding: 0 0 2px 20px;
    overflow: hidden;
    border-bottom: 1px solid #e9edf2;
    line-height: 28px;
    white-space: pre;
    color: #4f545b;
    font-family: "Noto Sans CJK SC", sans-serif;
    flex: none;
}

.msg + .msg { margin-top: 12px; }
.msg h4 { font-weight: 300; color: #3c9cf0; }
.msg.guest h4 { color: #ff9c14; }
.msg p, .msg h4 { height: 28px; }

.msg b, .msg time {
    font-family: "Liberation Mono", monospace;
    font-size: 14px;
    font-weight: 400;
}

.msg time { color: #b9bcc1; margin-left: 4px; }

.send-tools {
    display: flex;
    align-items: center;
    height: 42px;
    padding-left: 14px;
    gap: 20px;
    flex: none;
    white-space: nowrap;
}

.icon.face { width: 26px; height: 26px; }
.to { margin-left: 14px; color: #94979c; }
.send-tools .pick { width: 115px; height: 32px; margin: 0 -10px; padding-left: 12px; background: #fafcff; color: #3c4047; }
.send-tools .pick .icon { width: 20px; height: 20px; color: #7c838c; }
.says { color: #94979c; }

.draft {
    flex: 1;
    width: 100%;
    padding: 5px 20px;
    resize: none;
    line-height: 28px;
}

.draft::placeholder { color: #a0a3a8; }

.send {
    align-self: flex-end;
    width: 67px;
    height: 31px;
    margin: 0 9px 10px 0;
    border-radius: 3px;
    background: #ff9c00;
    color: #fff;
    flex: none;
}

.chat-side {
    display: flex;
    flex-direction: column;
    width: 67px;
    padding-top: 13px;
    flex: none;
}

.side-item {
    display: flex;
    flex-direction: column;
    align-items: center;
    gap: 6px;
    height: 83px;
    line-height: 24px;
    margin-bottom: 1px;
    color: #98a2ae;
}

.side-item svg { width: 30px; height: 32px; fill: #9aa5b1; }
.side-item.current { color: #ff9c00; }
.side-item.current svg { fill: #ff9c00; }
.cut { stroke: #fff; stroke-width: 2; fill: none; }
.ring { stroke: #fff; stroke-width: 1; }

.chat-scroll {
    position: absolute;
    left: 336px;
    top: 566px;
    width: 11px;
    height: 161px;
    border-radius: 6px;
    background: #a3a3a3;
}

.chat-foot {
    height: 42px;
    padding-left: 23px;
    line-height: 36px;
    border-top: 1px solid #e9edf2;
    border-right: 1px solid #8d8f93;
    color: #75787d;
    flex: none;
}

.chat-foot strong { color: #ff9c14; font-size: 18px; font-weight: 700; }

/* pinned SQL note */
.sql {
    position: absolute;
    left: 970px;
    top: 51px;
    width: 307px;
    height: 80px;
    background: #2b2b2b;
    color: #d8d8d8;
    box-shadow: 0 0 4px #777;
}

.sql pre {
    padding: 1px 3px;
    font-family: "DejaVu Sans Mono", monospace;
    font-size: 9px;
    line-height: 14px;
}

.sql em, .sql u, .sql s { font-style: normal; text-decoration: none; }
.sql em { color: #4a9be0; }
.sql u { color: #f0c330; }
.sql s { color: #d38d6c; }
.sql mark { background: #55585b; color: inherit; }

.sql-lines {
    position: absolute;
    left: 0;
    top: 0;
    width: 307px;
    height: 80px;
    fill: none;
    stroke: #f0392b;
}

.sql-cases, .sql-names {
    position: absolute;
    left: 178px;
    top: 5px;
    display: grid;
    grid-template-columns: 30px 15px 16px 30px auto;
    font-size: 7px;
    line-height: 9px;
    font-weight: 700;
    color: #e0362b;
}

.sql-names { left: 208px; top: 58px; grid-template-columns: 17px auto; }

/* input method bar */
.ime {
    position: absolute;
    right: 53px;
    bottom: 28px;
    width: 224px;
    height: 32px;
    display: flex;
    align-items: center;
    justify-content: space-between;
    padding: 0 12px 0 5px;
    background: #fff;
    border: 1px solid #4e5358;
    color: #59636a;
    font-size: 20px;
}

.ime svg { height: 30px; fill: #59636a; }

.pointer {
    position: absolute;
    left: 1233px;
    top: 452px;
    width: 14px;
    height: 24px;
}

/* watermarks */
.stamp, .stamp-faint, .stamp-pink {
    position: absolute;
    white-space: nowrap;
    pointer-events: none;
    line-height: 1;
}

.stamp {
    left: 596px;
    top: 794px;
    font-size: 94px;
    color: rgba(120, 132, 145, 0.22);
    transform-origin: left bottom;
    transform: rotate(-30deg);
}

.stamp span { font-size: 110px; }

.stamp-faint {
    left: 1083px;
    top: 667px;
    font-size: 92px;
    font-weight: 300;
    color: rgba(120, 132, 145, 0.12);
    transform: rotate(-42deg);
}

.stamp-pink {
    left: 30px;
    top: 122px;
    font-size: 36px;
    font-weight: 300;
    color: rgba(255, 120, 180, 0.6);
}
```
